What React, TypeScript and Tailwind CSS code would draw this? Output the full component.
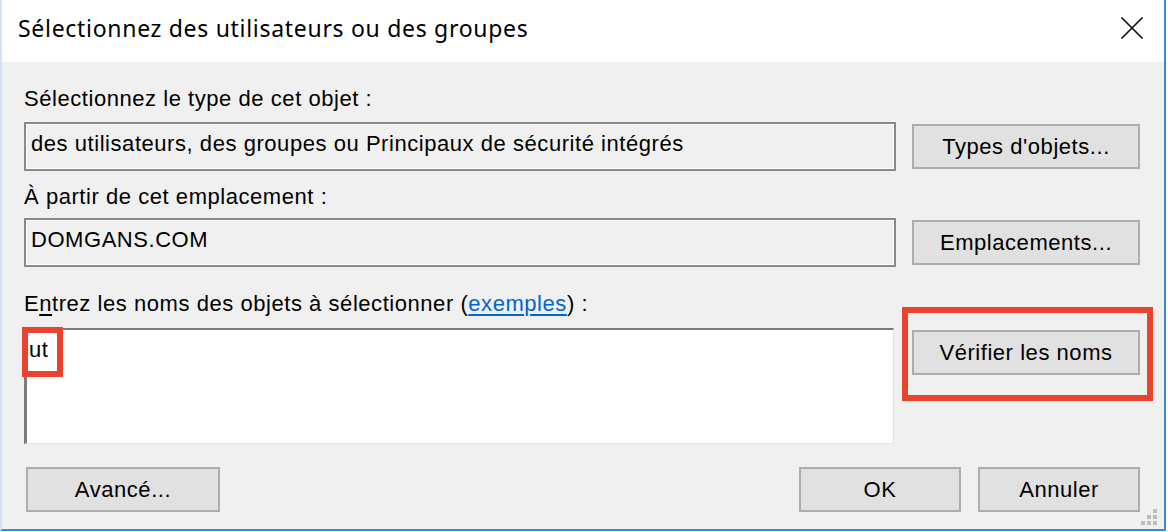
import React from "react";

function ReadBox({ children }: { children: React.ReactNode }) {
  return (
    <div className="flex-1 h-[49px] border-2 border-[#8a8a8a] shadow-[inset_0_0_0_1px_#ffffff] bg-[#f0f0f0] pl-[5px] pt-[7px] whitespace-nowrap overflow-hidden">
      {children}
    </div>
  );
}

function Btn({ children, w }: { children: React.ReactNode; w: string }) {
  return (
    <div className={`${w} h-[45px] shrink-0 border-2 border-[#adadad] bg-[#e1e1e1] flex items-center justify-center whitespace-nowrap`}>
      {children}
    </div>
  );
}

export default function App() {
  return (
    <div className="w-[1168px] h-[532px] bg-white relative overflow-hidden font-['Liberation_Sans',Arial,sans-serif] text-black">
      <div className="w-[1166px] h-[531px] flex flex-col border-l-2 border-r-2 border-b-2 border-l-[#d5e3f5] border-r-[#3b8ad9] border-b-[#3b8ad9]">
        {/* title bar */}
        <div className="h-[62px] shrink-0 bg-white flex items-start justify-between">
          <div className="pl-[16px] pt-[12px] leading-[32px] text-[23px] tracking-[0.7px] font-['Noto_Sans',sans-serif] text-[#000]">
            Sélectionnez des utilisateurs ou des groupes
          </div>
          <svg className="mt-[16px] mr-[20px]" width="24" height="24" viewBox="0 0 24 24">
            <path d="M1.5 1.5L22.5 22.5M22.5 1.5L1.5 22.5" stroke="#111" strokeWidth="1.7" fill="none" />
          </svg>
        </div>

        {/* body */}
        <div className="flex-1 bg-[#f0f0f0] pl-[22px] pr-[24px] flex flex-col text-[22px] leading-[26px] tracking-[0.55px]">
          <div className="mt-[24px] h-[26px] whitespace-nowrap">Sélectionnez le type de cet objet :</div>

          <div className="mt-[10px] flex items-center gap-[16px]">
            <ReadBox>des utilisateurs, des groupes ou Principaux de sécurité intégrés</ReadBox>
            <Btn w="w-[228px]">Types d'objets...</Btn>
          </div>

          <div className="mt-[13px] h-[26px] whitespace-nowrap">À partir de cet emplacement :</div>

          <div className="mt-[8px] flex items-center gap-[16px]">
            <ReadBox>DOMGANS.COM</ReadBox>
            <Btn w="w-[228px]">Emplacements...</Btn>
          </div>

          <div className="mt-[24px] h-[26px] whitespace-nowrap">
            E<span className="underline underline-offset-[3px]">n</span>trez les noms des objets à sélectionner (
            <span className="text-[#0066cc] underline underline-offset-[3px]">exemples</span>) :
          </div>

          <div className="mt-[11px] flex items-start gap-[16px]">
            <div className="flex-1 mr-[2px] h-[116px] bg-white border-t-2 border-l-[3px] border-r border-b border-t-[#7a7a7a] border-l-[#7a7a7a] border-r-[#e3e3e3] border-b-[#e3e3e3] pl-[2px] pt-[7px]">
              ut
            </div>
            <div className="mt-[2px]">
              <Btn w="w-[228px]">Vérifier les noms</Btn>
            </div>
          </div>

          <div className="mt-[23px] flex items-center">
            <div className="ml-[2px]">
              <Btn w="w-[194px]">Avancé...</Btn>
            </div>
            <div className="flex-1" />
            <Btn w="w-[162px]">OK</Btn>
            <div className="w-[17px]" />
            <Btn w="w-[162px]">Annuler</Btn>
          </div>
        </div>
      </div>

      {/* resize grip */}
      <svg className="absolute left-[1140px] top-[508px]" width="18" height="18" viewBox="0 0 18 18">
        <rect x="13" y="1" width="4" height="4" fill="#bdbdbd" />
        <rect x="7" y="7" width="4" height="4" fill="#bdbdbd" />
        <rect x="13" y="7" width="4" height="4" fill="#bdbdbd" />
        <rect x="1" y="13" width="4" height="4" fill="#bdbdbd" />
        <rect x="7" y="13" width="4" height="4" fill="#bdbdbd" />
        <rect x="13" y="13" width="4" height="4" fill="#bdbdbd" />
      </svg>

      {/* red annotation boxes */}
      <div className="absolute left-[22px] top-[327px] w-[41px] h-[50px] border-[6px] border-[#e8432d]" />
      <div className="absolute left-[902px] top-[307px] w-[251px] h-[94px] border-[6px] border-[#e8432d]" />
    </div>
  );
}
